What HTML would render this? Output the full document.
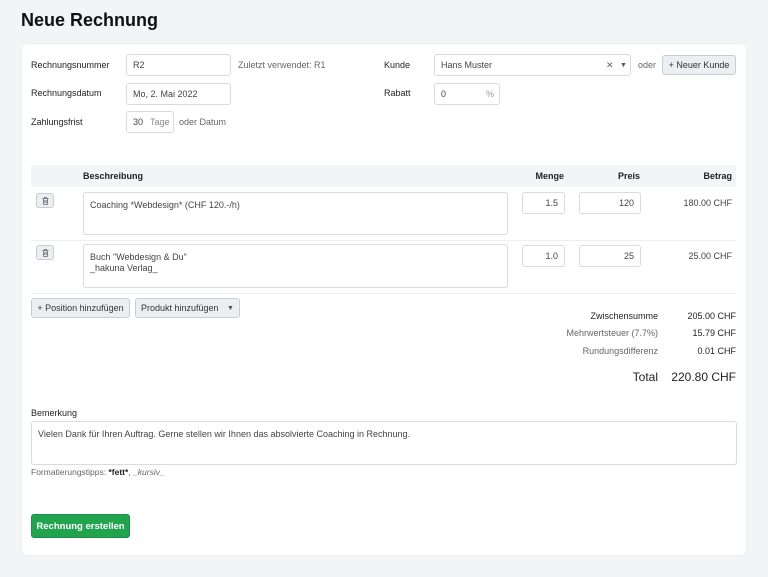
<!DOCTYPE html>
<html><head><meta charset="utf-8"><style>
*{box-sizing:border-box;margin:0;padding:0}
body{width:768px;height:577px;background:#f3f4f6;font-family:"Liberation Sans",sans-serif;color:#222;position:relative;overflow:hidden;font-size:9px}
.a{position:absolute}
.card{left:22px;top:44px;width:724px;height:511px;background:#fff;border-radius:5px;box-shadow:0 0 2px rgba(0,0,0,.06)}
.in{position:absolute;border:1px solid #d9dbe0;border-radius:3px;background:#fff;color:#444;font-size:9px;padding-left:6px;display:flex;align-items:center}
.lab{position:absolute;font-size:9px;color:#222;line-height:11px}
.g{color:#666}
.btn{position:absolute;background:#eceef1;border:1px solid #c9ccd1;border-radius:3px;font-size:9px;color:#333;display:flex;align-items:center;justify-content:center}
.r{text-align:right}
</style></head><body>
<div class="a" style="left:21px;top:10px;font-size:18px;font-weight:bold;color:#111">Neue Rechnung</div>
<div class="a card"></div>

<div class="lab" style="left:31px;top:60px">Rechnungsnummer</div>
<div class="in" style="left:126px;top:54px;width:105px;height:22px">R2</div>
<div class="lab g" style="left:238px;top:60px">Zuletzt verwendet: R1</div>
<div class="lab" style="left:31px;top:88px">Rechnungsdatum</div>
<div class="in" style="left:126px;top:83px;width:105px;height:22px">Mo, 2. Mai 2022</div>
<div class="lab" style="left:31px;top:117px">Zahlungsfrist</div>
<div class="in" style="left:126px;top:111px;width:48px;height:22px">30<span style="color:#888;margin-left:7px">Tage</span></div>
<div class="lab g" style="left:179px;top:117px">oder Datum</div>

<div class="lab" style="left:384px;top:60px">Kunde</div>
<div class="in" style="left:434px;top:54px;width:197px;height:22px">Hans Muster<span style="position:absolute;left:171px;color:#666">✕</span><span style="position:absolute;left:185px;color:#555;font-size:7px">▼</span></div>
<div class="lab g" style="left:638px;top:60px">oder</div>
<div class="btn" style="left:662px;top:55px;width:74px;height:20px">+ Neuer Kunde</div>
<div class="lab" style="left:384px;top:88px">Rabatt</div>
<div class="in" style="left:434px;top:83px;width:66px;height:22px">0<span style="position:absolute;left:51px;color:#999">%</span></div>

<div class="a" style="left:31px;top:165px;width:705px;height:22px;background:#f3f4f6"></div>
<div class="lab" style="left:83px;top:171px;font-weight:bold">Beschreibung</div>
<div class="lab r" style="left:500px;width:64px;top:171px;font-weight:bold">Menge</div>
<div class="lab r" style="left:580px;width:60px;top:171px;font-weight:bold">Preis</div>
<div class="lab r" style="left:670px;width:62px;top:171px;font-weight:bold">Betrag</div>

<div class="btn" style="left:36px;top:193px;width:18px;height:15px"><svg width="7" height="8" viewBox="0 0 7 8"><path d="M0.5 1.5h6M2.5 1.5v-1h2v1M1.3 1.5l.4 6h3.6l.4-6M2.8 3v3M4.2 3v3" stroke="#666" stroke-width=".8" fill="none"/></svg></div>
<div class="in" style="left:83px;top:192px;width:425px;height:43px;align-items:flex-start;padding-top:7px">Coaching *Webdesign* (CHF 120.-/h)</div>
<div class="in" style="left:522px;top:192px;width:43px;height:22px;justify-content:flex-end;padding-right:6px">1.5</div>
<div class="in" style="left:579px;top:192px;width:62px;height:22px;justify-content:flex-end;padding-right:6px">120</div>
<div class="lab r" style="left:660px;width:72px;top:198px;color:#444">180.00 CHF</div>
<div class="a" style="left:31px;top:240px;width:705px;height:1px;background:#eceef1"></div>

<div class="btn" style="left:36px;top:245px;width:18px;height:15px"><svg width="7" height="8" viewBox="0 0 7 8"><path d="M0.5 1.5h6M2.5 1.5v-1h2v1M1.3 1.5l.4 6h3.6l.4-6M2.8 3v3M4.2 3v3" stroke="#666" stroke-width=".8" fill="none"/></svg></div>
<div class="in" style="left:83px;top:244px;width:425px;height:44px;align-items:flex-start;padding-top:7px;line-height:11px">Buch "Webdesign &amp; Du"<br>_hakuna Verlag_</div>
<div class="in" style="left:522px;top:245px;width:43px;height:22px;justify-content:flex-end;padding-right:6px">1.0</div>
<div class="in" style="left:579px;top:245px;width:62px;height:22px;justify-content:flex-end;padding-right:6px">25</div>
<div class="lab r" style="left:660px;width:72px;top:251px;color:#444">25.00 CHF</div>
<div class="a" style="left:31px;top:293px;width:705px;height:1px;background:#eceef1"></div>

<div class="btn" style="left:31px;top:298px;width:99px;height:20px">+ Position hinzufügen</div>
<div class="btn" style="left:135px;top:298px;width:105px;height:20px;justify-content:flex-start;padding-left:5px">Produkt hinzufügen<span style="position:absolute;left:91px;font-size:7px;color:#555">▼</span></div>

<div class="lab r" style="left:540px;width:118px;top:311px">Zwischensumme</div>
<div class="lab r" style="left:660px;width:76px;top:311px">205.00 CHF</div>
<div class="lab r g" style="left:540px;width:118px;top:328px">Mehrwertsteuer (7.7%)</div>
<div class="lab r" style="left:660px;width:76px;top:328px">15.79 CHF</div>
<div class="lab r g" style="left:540px;width:118px;top:346px">Rundungsdifferenz</div>
<div class="lab r" style="left:660px;width:76px;top:346px">0.01 CHF</div>
<div class="a r" style="left:540px;width:118px;top:370px;font-size:12px">Total</div>
<div class="a r" style="left:660px;width:76px;top:370px;font-size:12px">220.80 CHF</div>

<div class="lab" style="left:31px;top:408px">Bemerkung</div>
<div class="in" style="left:31px;top:421px;width:706px;height:44px;align-items:flex-start;padding-top:7px">Vielen Dank für Ihren Auftrag. Gerne stellen wir Ihnen das absolvierte Coaching in Rechnung.</div>
<div class="lab g" style="left:31px;top:467px;font-size:8.5px">Formatierungstipps: <b style="color:#222">*fett*</b>, <i>_kursiv_</i></div>

<div class="a" style="left:31px;top:514px;width:99px;height:24px;background:#22a350;border:1px solid #1c8f44;border-radius:3px;color:#fff;font-size:9.5px;font-weight:bold;display:flex;align-items:center;justify-content:center;white-space:nowrap">Rechnung erstellen</div>
</body></html>
